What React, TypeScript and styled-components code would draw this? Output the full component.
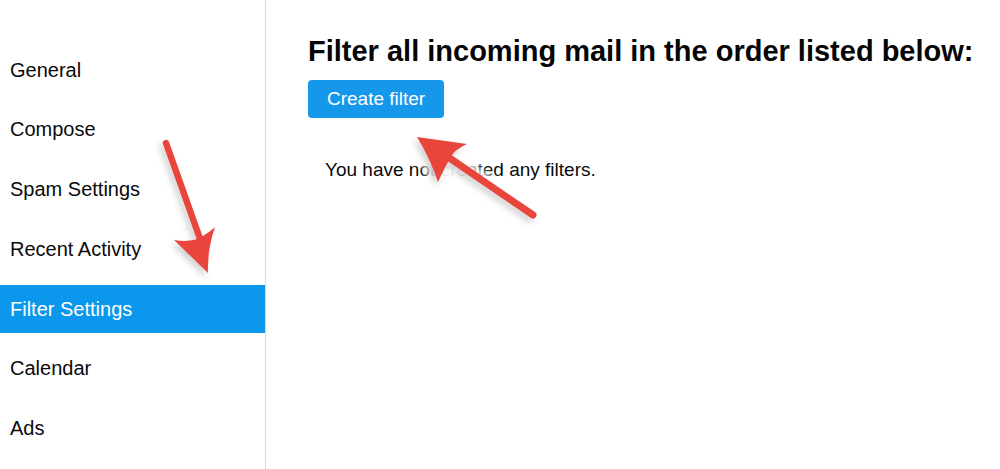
import { createGlobalStyle } from "styled-components";
import styled from "styled-components";

const GlobalStyle = createGlobalStyle`
  html, body {
    margin: 0;
    padding: 0;
    background: #ffffff;
    font-family: "Liberation Sans", Arial, Helvetica, sans-serif;
    color: #0a0a0a;
  }
`;

const menu = [
  "General",
  "Compose",
  "Spam Settings",
  "Recent Activity",
  "Filter Settings",
  "Calendar",
  "Ads",
];

export default function App() {
  return (
    <S.Page>
      <GlobalStyle />
      <S.Sidebar>
        {menu.map((label) => (
          <S.NavItem key={label} $active={label === "Filter Settings"}>
            {label}
          </S.NavItem>
        ))}
      </S.Sidebar>
      <S.Content>
        <S.Title>Filter all incoming mail in the order listed below:</S.Title>
        <S.Button>Create filter</S.Button>
        <S.Empty>You have not created any filters.</S.Empty>
      </S.Content>

      {/* annotation arrows drawn over the screenshot */}
      <S.Overlay viewBox="0 0 1000 469" width="1000" height="469">
        <defs>
          <filter id="halo" x="-50%" y="-50%" width="200%" height="200%">
            <feGaussianBlur stdDeviation="4" />
          </filter>
          <filter id="shadow" x="-20%" y="-20%" width="140%" height="140%">
            <feDropShadow dx="-3" dy="4" stdDeviation="3" floodColor="#000" floodOpacity="0.18" />
          </filter>
        </defs>

        <g filter="url(#halo)" opacity="0.95">
          <path d="M166 143 L204 250" stroke="#fff" strokeWidth="16" strokeLinecap="round" fill="none" />
          <path d="M530 214 L446 157" stroke="#fff" strokeWidth="18" strokeLinecap="round" fill="none" />
          <path d="M418 137 L467 144 L438 183 Z" fill="#fff" stroke="#fff" strokeWidth="12" />
          <rect x="429" y="158" width="35" height="24" fill="#fff" />
        </g>

        <g filter="url(#shadow)" fill="#e8443d">
          <path d="M166 143 L204 250" stroke="#e8443d" strokeWidth="6.5" strokeLinecap="round" fill="none" />
          <path d="M208 273 L174 240 Q193 243 203 236 Q211 231 215 227 Q207 250 208 273 Z" />

          <path d="M533 215 L448 157" stroke="#e8443d" strokeWidth="7" strokeLinecap="round" fill="none" />
          <path d="M417 137 L467 144 Q453 150 449 160 Q443 171 438 182 Q430 158 417 137 Z" />
        </g>
      </S.Overlay>
    </S.Page>
  );
}

const S = {
  Page: styled.div`
    position: relative;
    display: flex;
    width: 1000px;
    height: 469px;
    overflow: hidden;
  `,
  Sidebar: styled.nav`
    width: 266px;
    flex-shrink: 0;
    border-right: 1px solid #dadada;
    padding-top: 46px;
    box-sizing: border-box;
    display: flex;
    flex-direction: column;
    gap: 11.8px;
  `,
  NavItem: styled.div<{ $active?: boolean }>`
    height: 48px;
    display: flex;
    align-items: center;
    padding-left: 10px;
    font-size: 20px;
    line-height: 23px;
    color: ${(p) => (p.$active ? "#ffffff" : "#0a0a0a")};
    background: ${(p) => (p.$active ? "#0b97ec" : "transparent")};
  `,
  Content: styled.main`
    flex: 1;
    padding: 35px 0 0 41px;
    display: flex;
    flex-direction: column;
    align-items: flex-start;
  `,
  Title: styled.h1`
    margin: 0 0 0 1px;
    font-size: 29px;
    line-height: 33px;
    font-weight: 700;
    white-space: nowrap;
    color: #050505;
  `,
  Button: styled.button`
    margin: 12px 0 0 1px;
    height: 38px;
    padding: 0 19px;
    border: none;
    border-radius: 4px;
    background: #1598ea;
    color: #ffffff;
    font-family: "Liberation Sans", Arial, Helvetica, sans-serif;
    font-size: 19px;
    cursor: pointer;
  `,
  Empty: styled.p`
    margin: 41px 0 0 18px;
    font-size: 19px;
    line-height: 22px;
    color: #0a0a0a;
  `,
  Overlay: styled.svg`
    position: absolute;
    left: 0;
    top: 0;
    pointer-events: none;
  `,
};
